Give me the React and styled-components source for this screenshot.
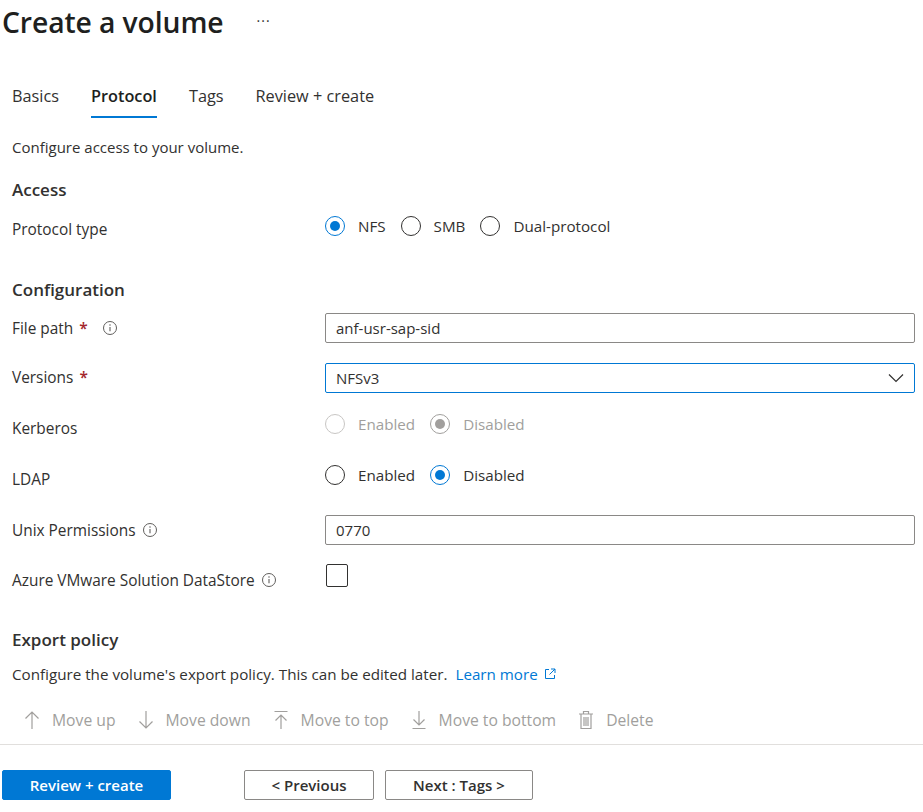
import React, { useState } from 'react'
import styled, { createGlobalStyle } from 'styled-components'

const GlobalStyle = createGlobalStyle`
  body {
    margin: 0;
    background: #ffffff;
    font-family: 'Open Sans', 'Noto Sans', sans-serif;
    color: #323130;
  }
`

const Page = styled.div`
  width: 923px;
  height: 812px;
  overflow: hidden;
  display: flex;
  flex-direction: column;
`

const TitleBar = styled.div`
  display: flex;
  align-items: center;
  height: 44px;
  padding-left: 2px;
  gap: 33px;
`

const Title = styled.h1`
  margin: 0;
  font-size: 28.3px;
  font-weight: 600;
  color: #201f1e;
  letter-spacing: -0.1px;
`

const More = styled.span`
  font-size: 14px;
  color: #323130;
  letter-spacing: 1px;
  margin-top: -4px;
`

const Tabs = styled.div`
  display: flex;
  gap: 32px;
  padding-left: 12px;
  margin-top: 31px;
  height: 43px;
`

const Tab = styled.div`
  font-size: 16.3px;
  font-weight: ${p => (p.active ? 600 : 400)};
  color: ${p => (p.active ? '#201f1e' : '#323130')};
  display: flex;
  align-items: center;
  height: 100%;
  border-bottom: 2px solid ${p => (p.active ? '#0078d4' : 'transparent')};
  box-sizing: border-box;
`

const Form = styled.div`
  padding: 0 8px 0 12px;
  display: flex;
  flex-direction: column;
`

const Intro = styled.p`
  margin: 19px 0 0;
  font-size: 15px;
  line-height: 20px;
`

const Heading = styled.h2`
  margin: ${p => p.top}px 0 0;
  font-size: 17px;
  font-weight: 600;
  line-height: 22px;
  color: #323130;
`

const Row = styled.div`
  display: flex;
  align-items: center;
  height: ${p => p.h}px;
`

const Label = styled.div`
  width: 313px;
  flex-shrink: 0;
  font-size: 15.4px;
  display: flex;
  align-items: center;
  gap: 6px;
  padding-top: ${p => p.drop || 0}px;
`

const Star = styled.span`
  color: #a4262c;
  font-weight: 600;
  margin-right: 8px;
`

const Control = styled.div`
  flex: 1;
  display: flex;
  align-items: center;
`

const TextBox = styled.div`
  flex: 1;
  height: 30px;
  box-sizing: border-box;
  border: 1px solid ${p => (p.focused ? '#0078d4' : '#8a8886')};
  border-radius: 2px;
  display: flex;
  align-items: center;
  justify-content: space-between;
  padding: 0 10px;
  font-size: 15px;
  color: #323130;
`

const RadioGroup = styled.div`
  display: flex;
  align-items: center;
  gap: 15px;
`

const RadioItem = styled.label`
  display: flex;
  align-items: center;
  gap: 13px;
  font-size: 15.2px;
  color: ${p => (p.disabled ? '#a19f9d' : '#323130')};
`

const Circle = styled.span`
  width: 20px;
  height: 20px;
  box-sizing: border-box;
  border-radius: 50%;
  border: 1px solid
    ${p =>
      p.disabled
        ? p.checked
          ? '#a19f9d'
          : '#c8c6c4'
        : p.checked
        ? '#0078d4'
        : '#323130'};
  display: flex;
  align-items: center;
  justify-content: center;
  &::after {
    content: '';
    width: 10px;
    height: 10px;
    border-radius: 50%;
    background: ${p => (p.disabled ? '#a19f9d' : '#0078d4')};
    display: ${p => (p.checked ? 'block' : 'none')};
  }
`

const CheckBox = styled.span`
  width: 22px;
  height: 23px;
  box-sizing: border-box;
  border: 1px solid #323130;
  border-radius: 2px;
  margin-left: 1px;
`

const Desc = styled.p`
  margin: 13px 0 0;
  font-size: 15.2px;
  line-height: 20px;
  display: flex;
  align-items: center;
`

const Link = styled.a`
  color: #0078d4;
  text-decoration: none;
  margin-left: 8px;
  display: inline-flex;
  align-items: center;
  gap: 6px;
`

const Toolbar = styled.div`
  display: flex;
  align-items: center;
  height: 44px;
  margin-top: 14px;
  padding-left: 24px;
  gap: 22px;
`

const ToolButton = styled.span`
  display: flex;
  align-items: center;
  gap: 12px;
  font-size: 15.7px;
  color: #a19f9d;
`

const Divider = styled.hr`
  margin: 2px 0 0;
  border: 0;
  border-top: 1px solid #e1dfdd;
  width: 100%;
`

const Footer = styled.div`
  display: flex;
  align-items: center;
  padding-left: 2px;
  margin-top: 25px;
`

const Button = styled.button`
  height: 30px;
  box-sizing: border-box;
  font-family: inherit;
  font-size: 15px;
  font-weight: 600;
  border-radius: 2px;
  padding: 0;
  width: ${p => p.w}px;
  margin-left: ${p => p.gap || 0}px;
  background: ${p => (p.primary ? '#0078d4' : '#ffffff')};
  color: ${p => (p.primary ? '#ffffff' : '#323130')};
  border: 1px solid ${p => (p.primary ? '#0078d4' : '#8a8886')};
`

const InfoIcon = () => (
  <svg width="16" height="16" viewBox="0 0 16 16">
    <circle cx="8" cy="8" r="6.5" fill="none" stroke="#605e5c" strokeWidth="1" />
    <line x1="8" y1="7" x2="8" y2="11.2" stroke="#605e5c" strokeWidth="1.1" />
    <circle cx="8" cy="5.1" r="0.75" fill="#605e5c" />
  </svg>
)

const Chevron = () => (
  <svg width="16" height="10" viewBox="0 0 16 10">
    <path d="M1 1.5 L8 8.5 L15 1.5" fill="none" stroke="#323130" strokeWidth="1.2" />
  </svg>
)

const ExternalIcon = () => (
  <svg width="12" height="12" viewBox="0 0 12 12">
    <path d="M5 1.5 H1.5 V10.5 H10.5 V7" fill="none" stroke="#0078d4" strokeWidth="1" />
    <path d="M7 1 H11 V5 M11 1 L5.5 6.5" fill="none" stroke="#0078d4" strokeWidth="1" />
  </svg>
)

const ToolIcon = ({ kind }) => {
  const s = { fill: 'none', stroke: '#a19f9d', strokeWidth: 1.2 }
  return (
    <svg width="16" height="20" viewBox="0 0 16 20">
      {kind === 'up' && <path d="M8 19 V2 M1.5 8.5 L8 2 L14.5 8.5" {...s} />}
      {kind === 'down' && <path d="M8 1 V18 M1.5 11.5 L8 18 L14.5 11.5" {...s} />}
      {kind === 'top' && (
        <path d="M1.5 1.5 H14.5 M8 19 V5 M2.5 10.5 L8 5 L13.5 10.5" {...s} />
      )}
      {kind === 'bottom' && (
        <path d="M1.5 18.5 H14.5 M8 1 V15 M2.5 9.5 L8 15 L13.5 9.5" {...s} />
      )}
      {kind === 'delete' && (
        <path
          d="M1 4 H15 M5.5 4 V1.5 H10.5 V4 M3 4 V18.5 H13 V4 M6 7 V16 M8 7 V16 M10 7 V16"
          {...s}
        />
      )}
    </svg>
  )
}

const Radio = ({ label, checked, disabled, onClick }) => (
  <RadioItem disabled={disabled} onClick={disabled ? undefined : onClick}>
    <Circle checked={checked} disabled={disabled} />
    {label}
  </RadioItem>
)

const tools = [
  { kind: 'up', label: 'Move up' },
  { kind: 'down', label: 'Move down' },
  { kind: 'top', label: 'Move to top' },
  { kind: 'bottom', label: 'Move to bottom' },
  { kind: 'delete', label: 'Delete' }
]

const App = () => {
  const [protocol, setProtocol] = useState('NFS')
  const [ldap, setLdap] = useState('Disabled')

  return (
    <Page>
      <GlobalStyle />
      <TitleBar>
        <Title>Create a volume</Title>
        <More>···</More>
      </TitleBar>
      <Tabs>
        <Tab>Basics</Tab>
        <Tab active>Protocol</Tab>
        <Tab>Tags</Tab>
        <Tab>Review + create</Tab>
      </Tabs>
      <Form>
        <Intro>Configure access to your volume.</Intro>
        <Heading top={22}>Access</Heading>
        <Row h={50}>
          <Label drop={6}>Protocol type</Label>
          <Control>
            <RadioGroup>
              {['NFS', 'SMB', 'Dual-protocol'].map(p => (
                <Radio
                  key={p}
                  label={p}
                  checked={protocol === p}
                  onClick={() => setProtocol(p)}
                />
              ))}
            </RadioGroup>
          </Control>
        </Row>
        <Heading top={28}>Configuration</Heading>
        <Row h={54}>
          <Label>
            File path <Star>*</Star>
            <InfoIcon />
          </Label>
          <Control>
            <TextBox>anf-usr-sap-sid</TextBox>
          </Control>
        </Row>
        <Row h={45}>
          <Label>
            Versions <Star>*</Star>
          </Label>
          <Control>
            <TextBox focused>
              NFSv3
              <Chevron />
            </TextBox>
          </Control>
        </Row>
        <Row h={48}>
          <Label drop={8}>Kerberos</Label>
          <Control>
            <RadioGroup>
              <Radio label="Enabled" disabled />
              <Radio label="Disabled" checked disabled />
            </RadioGroup>
          </Control>
        </Row>
        <Row h={54}>
          <Label drop={8}>LDAP</Label>
          <Control>
            <RadioGroup>
              {['Enabled', 'Disabled'].map(v => (
                <Radio
                  key={v}
                  label={v}
                  checked={ldap === v}
                  onClick={() => setLdap(v)}
                />
              ))}
            </RadioGroup>
          </Control>
        </Row>
        <Row h={56}>
          <Label>
            Unix Permissions
            <InfoIcon />
          </Label>
          <Control>
            <TextBox>0770</TextBox>
          </Control>
        </Row>
        <Row h={35}>
          <Label drop={9}>
            Azure VMware Solution DataStore
            <InfoIcon />
          </Label>
          <Control>
            <CheckBox />
          </Control>
        </Row>
        <Heading top={36}>Export policy</Heading>
        <Desc>
          Configure the volume's export policy. This can be edited later.
          <Link href="#">
            Learn more <ExternalIcon />
          </Link>
        </Desc>
      </Form>
      <Toolbar>
        {tools.map(t => (
          <ToolButton key={t.kind}>
            <ToolIcon kind={t.kind} />
            {t.label}
          </ToolButton>
        ))}
      </Toolbar>
      <Divider />
      <Footer>
        <Button primary w={169}>
          Review + create
        </Button>
        <Button w={130} gap={73}>
          &lt; Previous
        </Button>
        <Button w={148} gap={11}>
          Next : Tags &gt;
        </Button>
      </Footer>
    </Page>
  )
}

export default App
